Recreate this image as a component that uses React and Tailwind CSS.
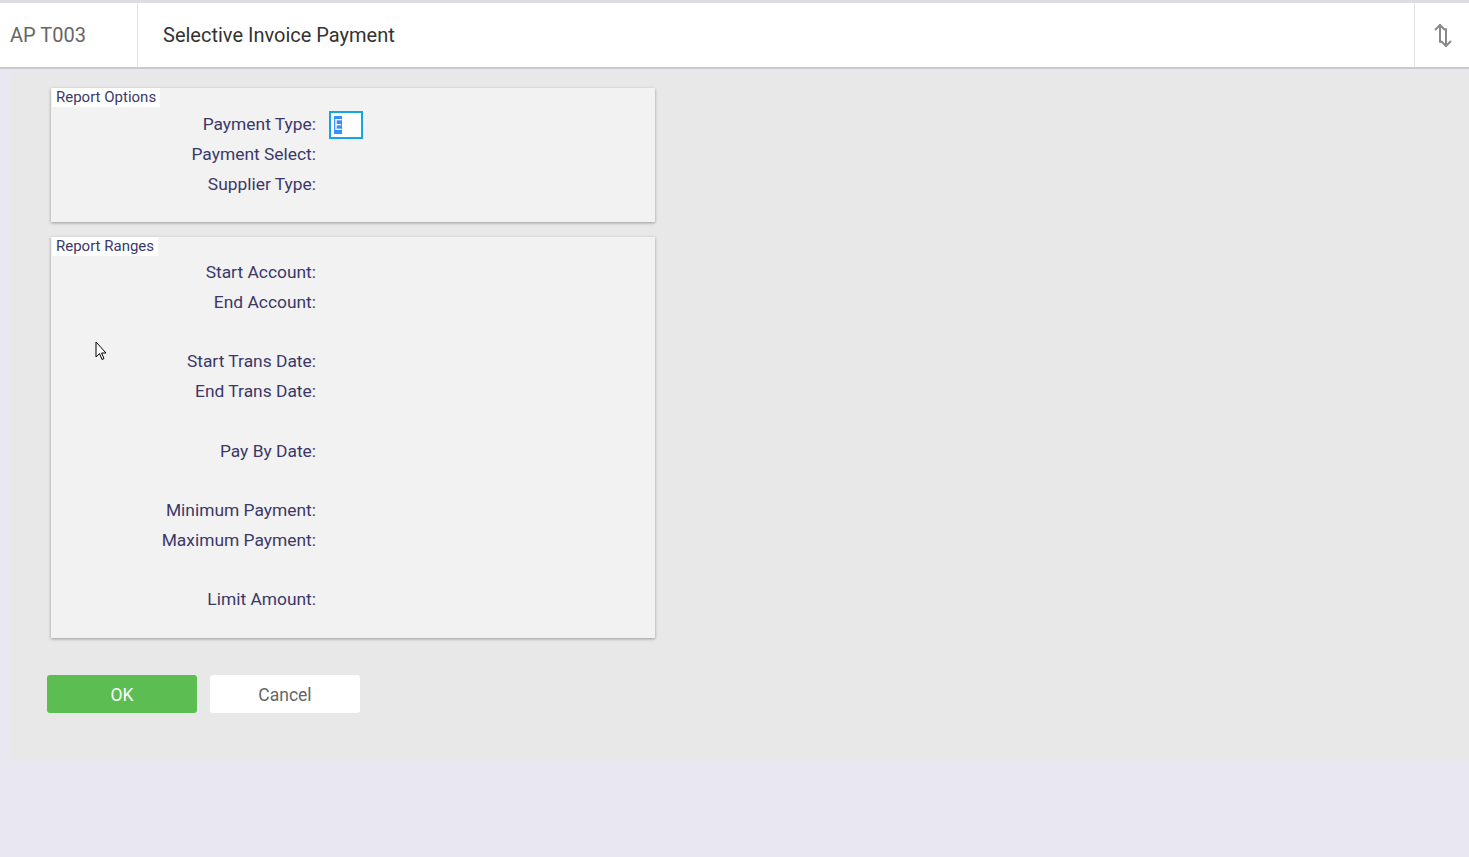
const Field = ({ label, children }) => (
  <div className="flex h-[30px] items-center">
    <div className="w-[265px] text-right text-[17.4px] text-[#3b3868]">{label}</div>
    <div className="ml-[13px]">{children}</div>
  </div>
);

const Spacer = () => <div className="h-[29px]" />;

const Panel = ({ title, children, className }) => (
  <div className={"relative ml-[41px] w-[604px] bg-[#f2f2f2] shadow-[0_1px_3px_rgba(0,0,0,0.35)] " + className}>
    <div className="absolute left-[1px] top-0 bg-white px-[4px] text-[15px] leading-[19px] text-[#3b3868]">{title}</div>
    {children}
  </div>
);

const SortIcon = () => (
  <svg width="22" height="26" viewBox="0 0 22 26" fill="none" stroke="#8a8a8a" strokeWidth="2" strokeLinecap="round" strokeLinejoin="round">
    <path d="M8 20V3" />
    <path d="M3.5 7.5 8 3l4.5 4.5" />
    <path d="M14 7v17" />
    <path d="M9.5 19.5 14 24l4.5-4.5" />
  </svg>
);

const Cursor = () => (
  <svg width="14" height="20" viewBox="0 0 14 20" className="absolute left-[95px] top-[341px]">
    <path d="M1 1v15l3.5-3.5 2.5 6 2-1-2.5-5.5H11L1 1z" fill="white" stroke="black" strokeWidth="1" strokeLinejoin="round" />
  </svg>
);

export default function App() {
  return (
    <div className="relative min-h-[857px] bg-[#e9e7f1] font-['Roboto',sans-serif]">
      <div className="h-[3px] bg-[#dedde3]" />
      <div className="flex h-[66px] border-b-2 border-[#c9c9c9] bg-white">
        <div className="flex w-[138px] items-center border-r border-[#e3e3e3] pl-[10px] text-[20px] text-[#666]">AP T003</div>
        <div className="flex flex-1 items-center pl-[25px] text-[20px] text-[#333]">Selective Invoice Payment</div>
        <div className="flex w-[55px] items-center justify-center border-l border-[#e3e3e3] pl-[2px]">
          <SortIcon />
        </div>
      </div>
      <div className="ml-[10px] mt-[3px] h-[687px] bg-[#e8e8e8] pt-[16px]">
        <Panel title="Report Options" className="h-[134px] pt-[21px]">
          <Field label="Payment Type:">
            <div className="mt-[2px] flex h-[28px] w-[34px] items-center border-2 border-[#16a6e6] bg-white pl-[3px]">
              <span className="bg-[#3390ff] text-[14px] leading-[18px] text-white">E</span>
            </div>
          </Field>
          <Field label="Payment Select:" />
          <Field label="Supplier Type:" />
        </Panel>
        <Panel title="Report Ranges" className="mt-[15px] h-[401px] pt-[20px]">
          <Field label="Start Account:" />
          <Field label="End Account:" />
          <Spacer />
          <Field label="Start Trans Date:" />
          <Field label="End Trans Date:" />
          <div className="h-[30px]" />
          <Field label="Pay By Date:" />
          <Spacer />
          <Field label="Minimum Payment:" />
          <Field label="Maximum Payment:" />
          <Spacer />
          <Field label="Limit Amount:" />
        </Panel>
        <div className="ml-[37px] mt-[37px] flex gap-[13px]">
          <button className="h-[38px] w-[150px] rounded-[3px] bg-[#5bbd52] pt-[2px] text-[17.5px] text-white">OK</button>
          <button className="h-[38px] w-[150px] rounded-[3px] bg-white pt-[2px] text-[17.5px] text-[#666]">Cancel</button>
        </div>
      </div>
      <Cursor />
    </div>
  );
}
